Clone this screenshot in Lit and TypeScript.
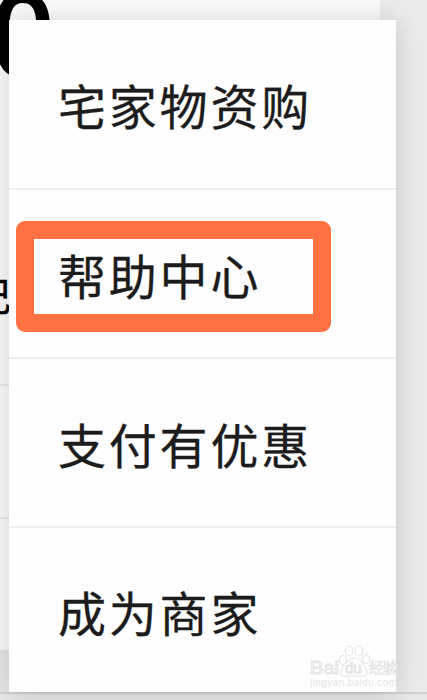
import { LitElement, html, css } from "lit";
import { customElement } from "lit/decorators.js";

@customElement("app-root")
export class AppRoot extends LitElement {
  static styles = css`
    :host {
      display: block;
      position: relative;
      width: 427px;
      height: 700px;
      overflow: hidden;
      background: #ebebeb;
      font-family: "Noto Sans CJK SC", sans-serif;
      color: #1c1c1c;
    }
    .page {
      display: grid;
      grid-template-rows: 386px 133px 131px 42px 1fr;
      width: 380px;
      height: 700px;
      background: #fafafa;
    }
    .page div { border-bottom: 2px solid #eaeaea; box-sizing: border-box; }
    .page .gap { background: #e6e6e6; border-bottom: 0; }
    .page .plain { border-bottom: 0; }
    .count {
      position: absolute;
      left: -10px;
      top: -21px;
      font: 500 116px/1 Roboto, sans-serif;
      color: #000;
    }
    .label {
      position: absolute;
      left: -29px;
      top: 274px;
      font-size: 40px;
      line-height: 40px;
      color: #000;
      -webkit-text-stroke: 0.5px #000;
    }
    .base {
      position: absolute;
      left: 0;
      right: 0;
      bottom: 0;
      height: 8px;
      box-sizing: border-box;
      border-top: 2px solid #d2d2d2;
      background: #e8e8e8;
    }
    .menu {
      position: absolute;
      left: 9px;
      top: 20px;
      width: 387px;
      height: 672px;
      display: grid;
      grid-template-rows: 170px 169px 169px 1fr;
      background: #fefefe;
      box-shadow: 0 2px 26px rgba(0, 0, 0, 0.17);
    }
    .item {
      display: flex;
      align-items: center;
      box-sizing: border-box;
      padding: 0 0 0 49px;
      border-bottom: 2px solid #eee;
      font-size: 48px;
      line-height: 60px;
      letter-spacing: 2.8px;
      white-space: nowrap;
      -webkit-text-stroke: 0.3px #1c1c1c;
    }
    .item:last-child { border-bottom: 0; padding-top: 2px; }
    .mark {
      position: absolute;
      left: 16px;
      top: 221px;
      width: 315px;
      height: 111px;
      box-sizing: border-box;
      border: 18px solid #ff7043;
      border-radius: 9px;
    }
    .watermark {
      position: absolute;
      left: 306px;
      top: 642px;
    }
    .watermark text { font-family: "Liberation Sans", "Noto Sans CJK SC", sans-serif; }
  `;

  private items = ["宅家物资购", "帮助中心", "支付有优惠", "成为商家"];

  render() {
    return html`
      <div class="page">
        <div></div><div></div><div class="plain"></div><div class="gap"></div>
      </div>
      <span class="count">0</span>
      <span class="label">记</span>
      <div class="base"></div>
      <div class="menu">
        ${this.items.map((t) => html`<div class="item">${t}</div>`)}
      </div>
      <div class="mark"></div>
      <svg class="watermark" width="96" height="48" fill="#fff" stroke="#e2e2e2" stroke-width="1">
        <ellipse cx="37" cy="18" rx="3.5" ry="4.5" />
        <ellipse cx="43" cy="9" rx="3.8" ry="5" />
        <ellipse cx="53" cy="9" rx="3.8" ry="5" />
        <ellipse cx="60" cy="17" rx="3.5" ry="4.5" />
        <path d="M48 16C42 16 35 25 35 30C35 36 42 34 48 34S61 36 61 30C61 25 54 16 48 16Z" />
        <text x="4" y="32" font-size="19" textLength="29" lengthAdjust="spacingAndGlyphs">Bai</text>
        <text x="39" y="31" font-size="15">du</text>
        <text x="63" y="31" font-size="15" textLength="29" stroke-width="0.7">经验</text>
        <text x="4" y="44" font-size="10" stroke="none" fill="#e6e6e6" textLength="87">jingyan.baidu.com</text>
      </svg>
    `;
  }
}
